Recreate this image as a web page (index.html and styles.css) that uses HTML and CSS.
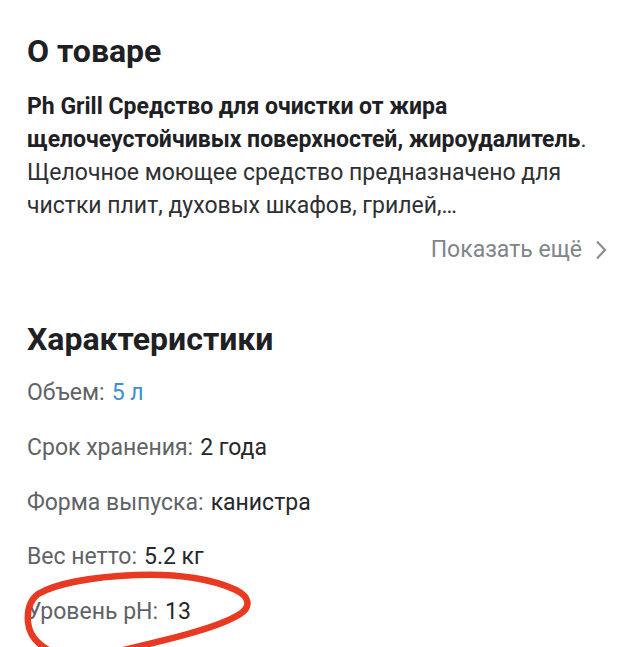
FILE: index.html
```html
<!DOCTYPE html>
<html lang="ru">
<head>
<meta charset="utf-8">
<link rel="stylesheet" href="styles.css">
</head>
<body>
<div class="page">
  <section class="about">
    <h2 class="heading">О товаре</h2>
    <p class="desc"><b>Ph Grill Средство для очистки от жира<br>щелочеустойчивых поверхностей, жироудалитель</b>.<br>Щелочное моющее средство предназначено для<br>чистки плит, духовых шкафов, грилей,…</p>
    <div class="more-row">
      <a class="more">Показать ещё
        <svg class="chev" width="12" height="22" viewBox="0 0 12 22"><path d="M2 2.5 L10 11 L2 19.5" fill="none" stroke="#8a8e93" stroke-width="2.2"/></svg>
      </a>
    </div>
  </section>
  <section class="specs">
    <h2 class="heading">Характеристики</h2>
    <ul class="spec-list">
      <li class="spec"><span class="label">Объем:</span><span class="value link">5 л</span></li>
      <li class="spec"><span class="label">Срок хранения:</span><span class="value">2 года</span></li>
      <li class="spec"><span class="label">Форма выпуска:</span><span class="value">канистра</span></li>
      <li class="spec"><span class="label">Вес нетто:</span><span class="value">5.2 кг</span></li>
      <li class="spec"><span class="label">Уровень pH:</span><span class="value">13</span></li>
    </ul>
  </section>
  <svg class="mark" width="640" height="647" viewBox="0 0 640 647">
    <path d="M52 652 C 38 645, 29 635, 28 622 C 27 610, 30 600, 38 594 C 55 584, 90 577, 135 575 C 180 573, 215 580, 236 590 C 250 597, 251 607, 240 614 C 220 627, 175 638, 115 652" fill="none" stroke="#e83a22" stroke-width="6.5" stroke-linecap="round" stroke-linejoin="round"/>
  </svg>
</div>
</body>
</html>
```
FILE: styles.css
```css
html, body { margin: 0; padding: 0; background: #ffffff; }
body { font-family: Roboto, "Noto Sans", Arial, sans-serif; color: #25272a; }
.page { position: relative; width: 640px; height: 647px; overflow: hidden; padding: 0 27px; box-sizing: border-box; }
.heading { margin: 0; font-size: 32px; font-weight: 700; line-height: 40px; color: #1e2023; letter-spacing: 0; }
.about { padding-top: 31px; }
.desc { margin: 19px 0 0; font-size: 23px; line-height: 33px; color: #2e3033; white-space: nowrap; }
.desc b { font-weight: 700; color: #1e2023; }
.more-row { display: flex; justify-content: flex-end; margin-top: 13px; padding-right: 6px; }
.more { display: flex; align-items: center; gap: 13px; font-size: 23px; line-height: 30px; color: #80858b; }
.specs { margin-top: 54px; }
.spec-list { list-style: none; margin: 19px 0 0; padding: 0; }
.spec { display: flex; gap: 7px; font-size: 23px; line-height: 30px; height: 54.8px; }
.label { color: #5f6367; }
.value { color: #25272a; }
.value.link { color: #3d8fd1; }
.mark { position: absolute; left: 0; top: 0; pointer-events: none; }
```
